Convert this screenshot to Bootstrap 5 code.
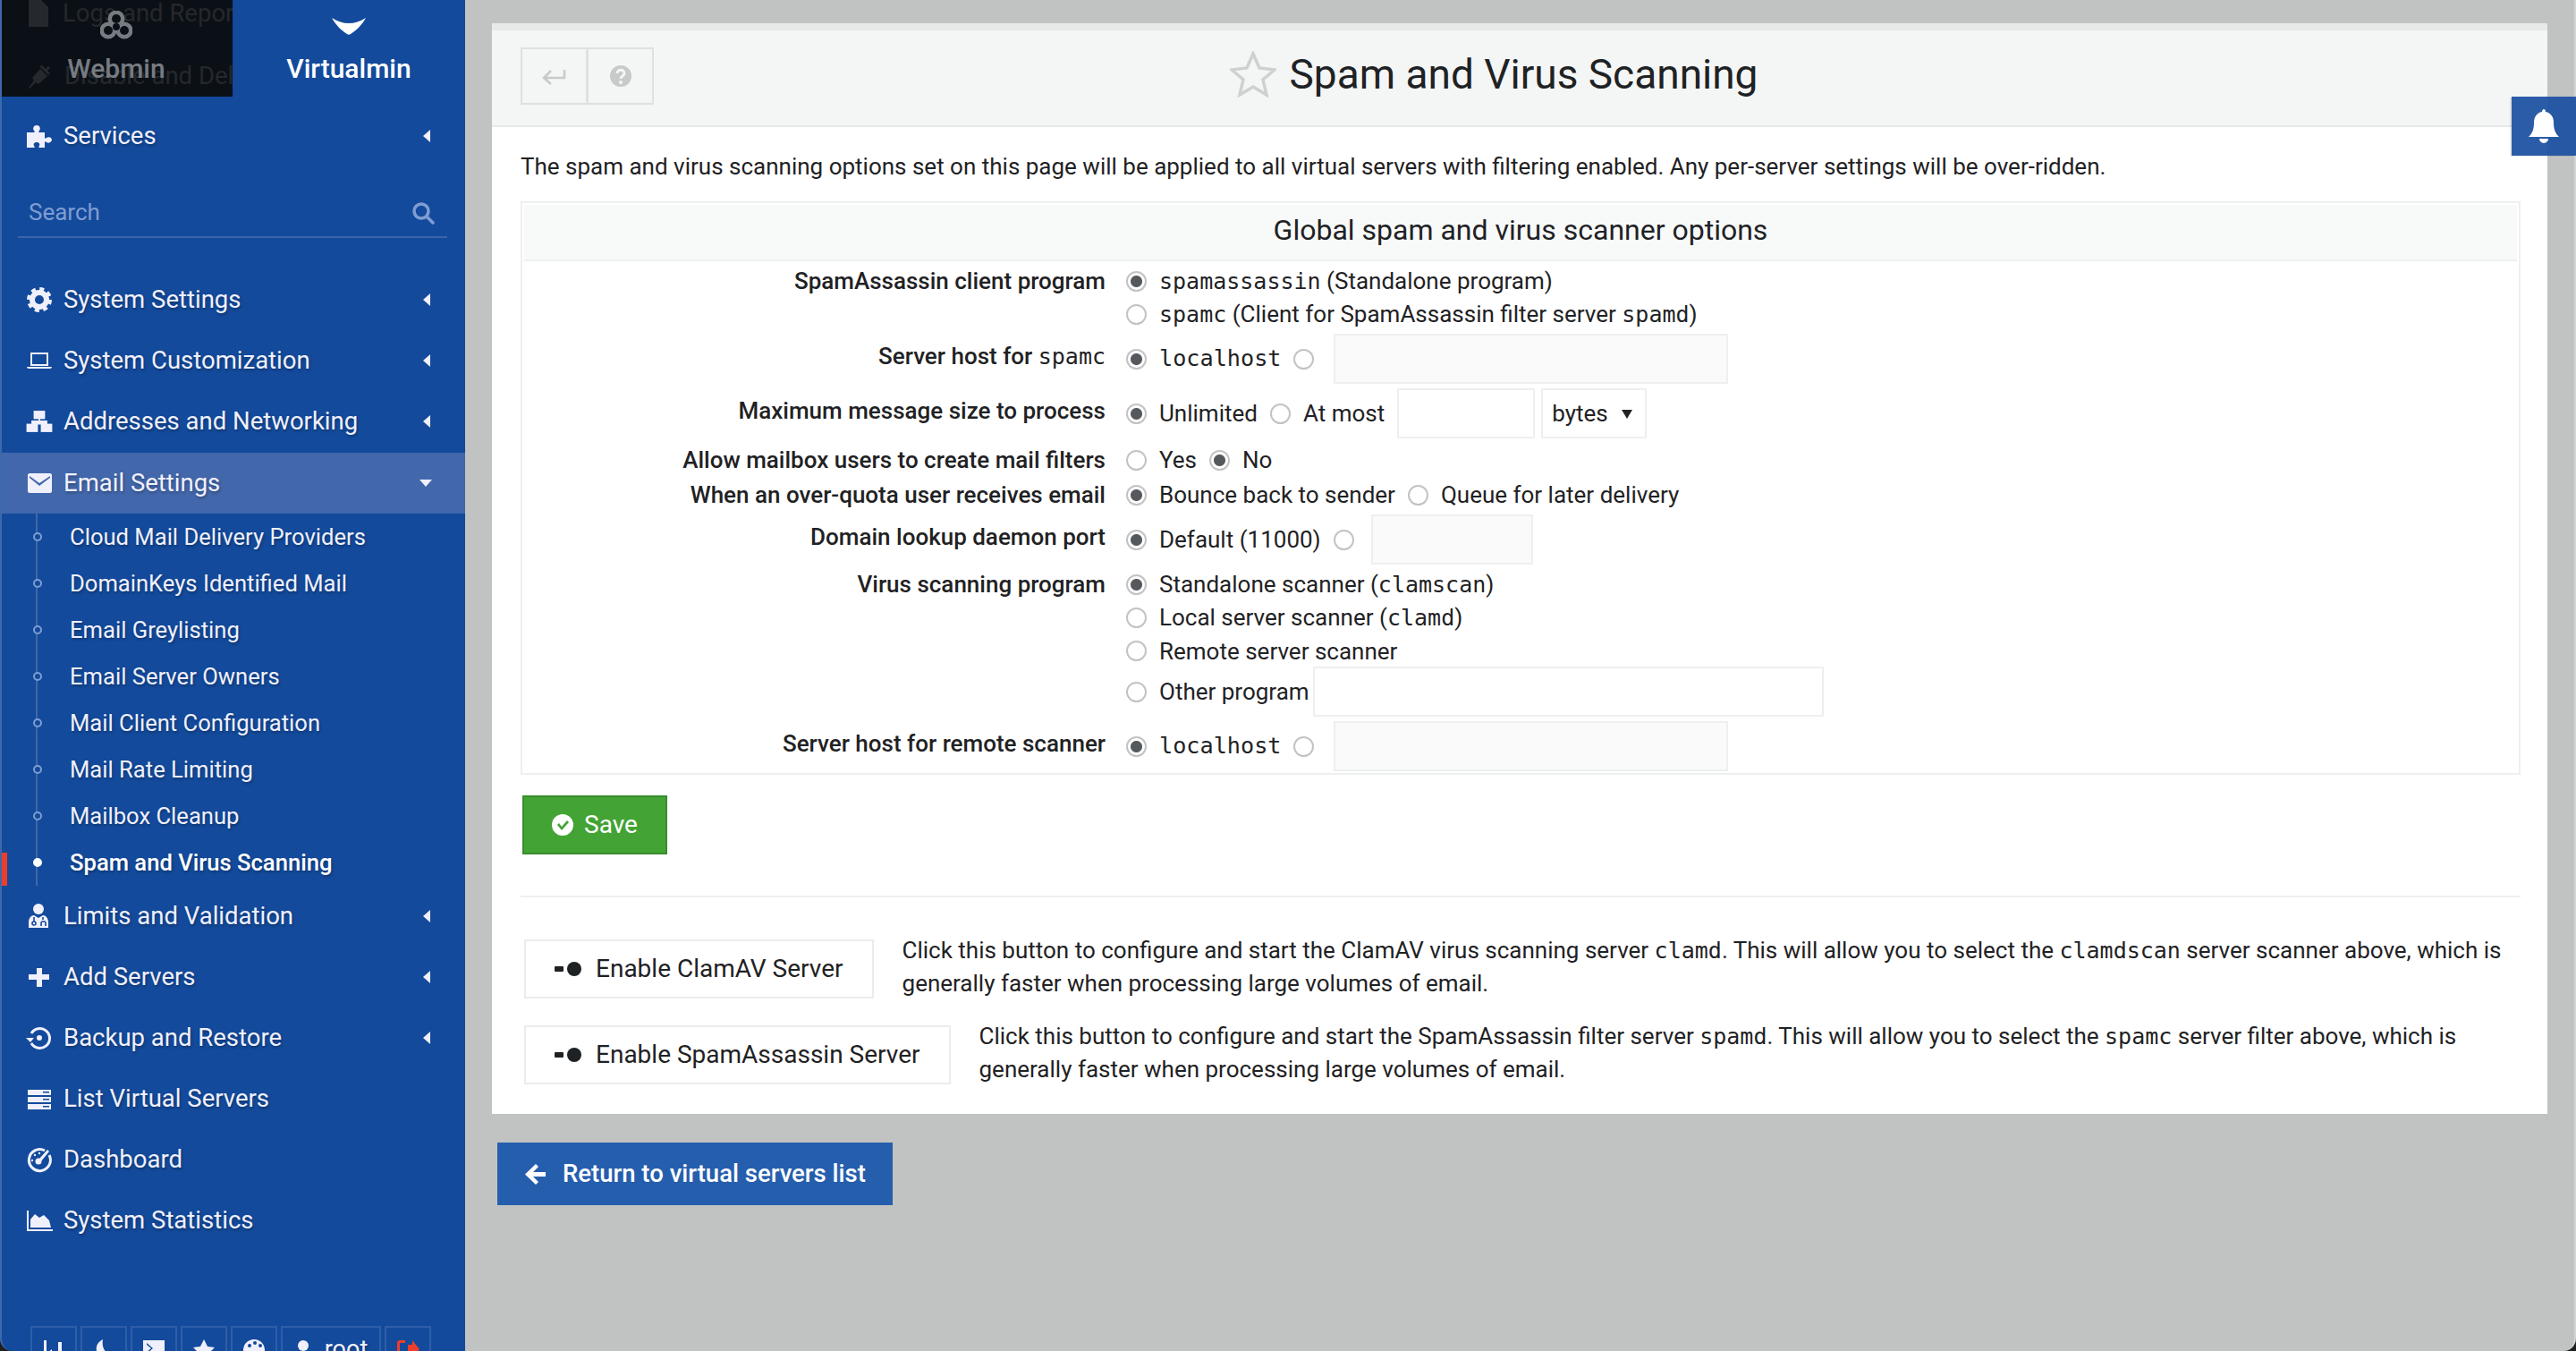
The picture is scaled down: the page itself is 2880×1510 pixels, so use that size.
<!DOCTYPE html>
<html lang="en">
<head>
    <meta charset="UTF-8">
    <title>Spam and Virus Scanning</title>
    <link href="https://cdn.jsdelivr.net/npm/bootstrap@5.3.0/dist/css/bootstrap.min.css" rel="stylesheet">
    <style>
        html, body { height: 100%; }
        body { background: #1e1f20; font-family: Roboto, "Liberation Sans", sans-serif; font-size: 26px; color: #1f2224; overflow: hidden; }
        code, .mono { font-family: "DejaVu Sans Mono", "Liberation Mono", monospace; font-size: 25px; color: inherit; }
        .mono { font-size: 25.2px; }

        /* sidebar */
        .side-menu { width: 520px; height: 1510px; flex: none; background: #134a9b; border-left: 2px solid #3c69ab; color: #f0f0fc; overflow: hidden; border-bottom-left-radius: 14px; font-size: 27.5px; text-shadow: 1px 2px 3px rgba(0,0,0,.28); }
        .side-tabs { height: 108px; margin-left: -2px; margin-bottom: 10px; }
        .side-tab { width: 260px; flex: none; position: relative; overflow: hidden; text-align: center; font-weight: 500; font-size: 30px; text-shadow: none; }
        .side-tab.dark { background: #0b1017; color: #777c82; }
        .side-tab.blue { color: #fff; }
        .tab-logo { position: absolute; left: 0; right: 0; top: 10px; margin: auto; display: block; }
        .tab-name { position: absolute; left: 0; right: 0; top: 57px; line-height: 40px; }
        .ghost { position: absolute; left: 30px; white-space: nowrap; color: #25282c; font-weight: 400; display: flex; gap: 14px; align-items: center; font-size: 27.5px; }
        .menu-row { height: 68px; padding-left: 27px; padding-right: 37px; gap: 12px; white-space: nowrap; }
        .menu-row .ico { width: 30px; height: 30px; flex: none; fill: #f0f0fc; }
        .menu-row .lbl { flex: 1; }
        .tri-left { width: 0; height: 0; border-top: 7px solid transparent; border-bottom: 7px solid transparent; border-right: 8px solid #f0f0fc; margin-right: 2px; }
        .tri-down { width: 0; height: 0; border-left: 7px solid transparent; border-right: 7px solid transparent; border-top: 8px solid #f0f0fc; }
        .menu-row.on { background: #4267ab; margin-left: -2px; padding-left: 29px; margin-top: 1px; }
        .side-search { height: 80px; margin: 0 20px 35px 18px; padding: 25px 14px 0 12px; border-bottom: 2px solid #3a64a8; color: #7f9dd2; text-shadow: none; font-size: 26px; }
        .sub-list { position: relative; padding-left: 76px; margin: 0; list-style: none; }
        .sub-list::before { content: ""; position: absolute; left: 38px; top: 0; bottom: 0; width: 2px; background: #3f67aa; }
        .sub-list li { height: 52px; line-height: 52px; position: relative; font-size: 25.6px; white-space: nowrap; }
        .sub-list li::before { content: ""; position: absolute; left: -41px; top: 21px; width: 10px; height: 10px; border-radius: 50%; border: 2px solid #7f9dd2; background: #134a9b; }
        .sub-list li.cur { font-weight: 500; color: #fff; }
        .sub-list li.cur::before { background: #fff; border-color: #fff; }
        .sub-list li.cur::after { content: ""; position: absolute; left: -78px; top: 15px; width: 8px; height: 37px; background: #ee3d2b; }
        .side-foot { margin-top: 84px; padding-left: 32px; gap: 4px; }
        .foot-btn { height: 60px; width: 52px; border: 2px solid #2f5ea9; display: flex; justify-content: center; padding-top: 12px; gap: 8px; font-size: 27px; line-height: 24px; flex: none; }
        .foot-btn svg { width: 26px; height: 26px; fill: #f0f0fc; flex: none; }
        .foot-btn.wide { width: 112px; }

        /* main panel */
        .main-wrap { padding: 26px 30px 0 30px; flex: 1; min-width: 0; position: relative; background: #c1c3c2; border-right: 2px solid #d3d4d3; border-bottom-right-radius: 14px; }
        .panel { background: #fff; border-top: 8px solid #e7e8e8; height: 1219px; }
        .panel-head { height: 108px; background: #f4f5f5; border-bottom: 2px solid #e7e8e8; padding: 19px 32px 0; position: relative; }
        .head-btns .btn { width: 75px; height: 64px; background: transparent; border: 2px solid #dfe0e0; border-radius: 0; padding: 0; display: flex; align-items: center; justify-content: center; }
        .head-btns .btn + .btn { margin-left: -2px; }
        .page-title { flex: 1; text-align: center; font-size: 46px; font-weight: 400; margin: 0; line-height: 60px; padding-right: 140px; }
        .page-title svg { width: 52px; height: 52px; margin: -8px 15px 0 -67px; vertical-align: middle; }
        .panel-body { padding: 0 30px 0 32px; }
        .intro { margin: 0; height: 83px; line-height: 88px; }
        .opt-box { border: 2px solid #eeefef; height: 641px; }
        .opt-head { height: 63px; background: #f8f9f9; border-bottom: 2px solid #eeefef; margin: 2px 2px 0; line-height: 56px; text-align: center; font-size: 32px; }
        .opt-row { display: grid; grid-template-columns: 652px 1fr; column-gap: 23px; margin-top: 3px; }
        .opt-row.gap-five { margin-top: 5px; }
        .opt-row.gap-six { margin-top: 6px; }
        .opt-label { font-weight: 500; text-align: right; line-height: 36px; margin: 0; white-space: nowrap; }
        .opt-label.tall { line-height: 50px; }
        .opt-line { min-height: 36px; line-height: 36px; display: flex; align-items: center; gap: 14px; white-space: nowrap; }
        .opt-line.tall { min-height: 56px; }
        .line-stack .opt-line { min-height: 37px; }
        .line-stack .opt-line.tall { min-height: 56px; margin-top: -1px; }
        .rad { appearance: none; width: 23px; height: 23px; flex: none; margin: 0; border: 2px solid #c3c3c3; border-radius: 50%; background: #fff; }
        .rad:checked { background: radial-gradient(circle, #55585c 0 6px, #fff 7px); }
        .form-control.fld, .form-select.fld { height: 56px; border: 2px solid #eeefef; border-radius: 0; background-color: #fff; font-size: 26px; padding: 0 10px; color: #1f2224; }
        .form-control.fld:disabled { background: #fafafa; }
        .fld-host { width: 441px; margin-left: 8px; }
        .fld-size { width: 154px; }
        .fld-port { width: 181px; margin-left: 5px; }
        .fld-other { width: 571px; margin-left: -10px; }
        .form-select.fld { width: 118px; margin-left: -7px; background-position: right 8px center; background-size: 24px 24px; background-image: url("data:image/svg+xml,%3Csvg xmlns='http://www.w3.org/2000/svg' viewBox='0 0 24 24'%3E%3Cpath d='M6 8h12l-6 10z' fill='%23222'/%3E%3C/svg%3E"); }
        .save-btn.btn { display: flex; align-items: center; gap: 11px; width: 162px; height: 66px; margin: 23px 0 46px 2px; padding: 0 0 0 30px; background: #43a335; border: 2px solid #388d2c; border-radius: 0; color: #fff; font-size: 28px; }
        .save-btn svg, .back-btn svg { width: 26px; height: 26px; fill: #fff; flex: none; }
        .panel-sep { border-top: 2px solid #eeefef; margin-bottom: 47px; }
        .act-row { display: flex; gap: 32px; line-height: 37px; margin-bottom: 28px; padding-left: 4px; height: 68px; }
        .act-btn.btn { flex: none; height: 66px; display: flex; align-items: center; gap: 14px; padding: 0 32px; background: #fff; border: 2px solid #ececec; border-radius: 0; color: #1f2224; font-size: 28px; }
        .act-btn svg { width: 32px; height: 18px; flex: none; fill: #1f2224; }
        .act-row p { margin: -6px 0 0; }
        .back-btn.btn { display: inline-flex; align-items: center; gap: 17px; width: 442px; height: 70px; margin: 32px 0 0 6px; padding: 0 0 0 30px; background: #265eae; border: 0; border-radius: 0; color: #fff; font-size: 27.5px; font-weight: 500; white-space: nowrap; }
        .bell-tab { position: absolute; right: 0; top: 108px; width: 72px; height: 66px; background: rgba(27,80,160,.93); display: flex; align-items: center; justify-content: center; box-shadow: -2px 1px 0 rgba(0,0,0,.08); }
        .bell-tab svg { width: 36px; height: 40px; fill: #fff; }
    </style>
</head>
<body class="d-flex m-0">
    <aside class="side-menu">
        <div class="side-tabs d-flex">
            <div class="side-tab dark">
                <div class="ghost" style="top: -6px"><svg width="26" height="30" viewBox="0 0 26 30"><path d="M2 0h14l8 8v22H2z" fill="#25282c"/></svg>Logs and Reports</div>
                <div class="ghost" style="top: 64px"><svg width="28" height="30" viewBox="0 0 28 30"><path d="M2 28l6-8-2-3 9-10 8 8-10 9-3-2-7 7zM17 3l4 4 3-3 2 2-3 3 3 3-2 2L14 4z" fill="#25282c"/></svg>Disable and Delete</div>
                <svg class="tab-logo" width="36" height="32" viewBox="0 0 36 32" style="top: 12px">
                    <g fill="none" stroke="#777c82" stroke-width="6"><circle cx="18" cy="9" r="6.500"/><circle cx="9" cy="22" r="6.500"/><circle cx="27" cy="22" r="6.500"/></g>
                    <g fill="#0b1017"><circle cx="18" cy="9" r="5"/><circle cx="9" cy="22" r="5"/><circle cx="27" cy="22" r="5"/><circle cx="18" cy="18" r="4"/></g>
                </svg>
                <div class="tab-name">Webmin</div>
            </div>
            <div class="side-tab blue">
                <svg class="tab-logo" width="38" height="20" viewBox="0 0 38 20" style="top: 19px"><path d="M0 1c7 4 12 6 19 6s12-2 19-6C33 10 27 15 21 19c-1 1-3 1-4 0C11 15 5 10 0 1z" fill="#fff"/></svg>
                <div class="tab-name">Virtualmin</div>
            </div>
        </div>

        <div class="menu-row d-flex align-items-center">
            <svg class="ico" viewBox="0 0 30 30"><path d="M1 11h8c1 0 1-1 0-2-2-3 0-6 3-6s5 3 3 6c-1 1-1 2 0 2h6v6c0 1 1 1 2 0 3-2 6 0 6 2s-3 5-6 3c-1-1-2-1-2 0v6h-6c-1 0-1-1 0-2 1-3-1-4-3-4s-4 1-3 4c1 1 1 2 0 2H1z"/></svg>
            <span class="lbl">Services</span><span class="tri-left"></span>
        </div>
        <div class="side-search d-flex align-items-center justify-content-between">
            <span>Search</span>
            <svg width="26" height="26" viewBox="0 0 26 26" fill="none" stroke="#7f9dd2" stroke-width="3.500" stroke-linecap="round"><circle cx="11" cy="11" r="8"/><path d="M17 17l7 7"/></svg>
        </div>
        <div class="menu-row d-flex align-items-center">
            <svg class="ico" viewBox="0 0 30 30"><circle cx="15" cy="15" r="8" fill="none" stroke="#f0f0fc" stroke-width="6"/><circle cx="15" cy="15" r="12" fill="none" stroke="#f0f0fc" stroke-width="4" stroke-dasharray="5 4.4"/></svg>
            <span class="lbl">System Settings</span><span class="tri-left"></span>
        </div>
        <div class="menu-row d-flex align-items-center">
            <svg class="ico" viewBox="0 0 30 30"><path d="M5 6h20v15H5zm2 2v11h16V8zM1 22h28c0 1-1 2-2 2H3c-1 0-2-1-2-2z" fill-rule="evenodd"/></svg>
            <span class="lbl">System Customization</span><span class="tri-left"></span>
        </div>
        <div class="menu-row d-flex align-items-center">
            <svg class="ico" viewBox="0 0 30 30" fill="none" stroke="#f0f0fc" stroke-width="1.800"><rect x="9.500" y="4" width="11" height="7.500"/><rect x="1.500" y="18.500" width="11" height="7.500"/><rect x="17.500" y="18.500" width="11" height="7.500"/><path d="M15 11.500v3.500M7 18.500V15h16v3.500"/></svg>
            <span class="lbl">Addresses and Networking</span><span class="tri-left"></span>
        </div>
        <div class="menu-row on d-flex align-items-center">
            <svg class="ico" viewBox="0 0 30 30"><path d="M4 4h23c1 0 2 1 2 2v18c0 1-1 2-2 2H4c-1 0-2-1-2-2V6c0-1 1-2 2-2zm0 5l11 9 12-9V7L15 15 4 7z" fill-rule="evenodd"/></svg>
            <span class="lbl">Email Settings</span><span class="tri-down"></span>
        </div>
        <ul class="sub-list">
            <li>Cloud Mail Delivery Providers</li>
            <li>DomainKeys Identified Mail</li>
            <li>Email Greylisting</li>
            <li>Email Server Owners</li>
            <li>Mail Client Configuration</li>
            <li>Mail Rate Limiting</li>
            <li>Mailbox Cleanup</li>
            <li class="cur">Spam and Virus Scanning</li>
        </ul>
        <div class="menu-row d-flex align-items-center">
            <svg class="ico" viewBox="0 0 30 30"><circle cx="14" cy="7" r="6"/><path d="M3 28v-6c0-5 3-8 6-8l5 3 5-3c3 0 6 3 6 8v6z"/><path d="M9 16v5M19 16v3M17 26v-3c0-3 5-3 5 0v3" fill="none" stroke="#134a9b" stroke-width="1.600"/><circle cx="9" cy="23" r="2" fill="none" stroke="#134a9b" stroke-width="1.600"/></svg>
            <span class="lbl">Limits and Validation</span><span class="tri-left"></span>
        </div>
        <div class="menu-row d-flex align-items-center">
            <svg class="ico" viewBox="0 0 30 30"><path d="M12 5h6v7h8v6h-8v8h-6v-8H3v-6h9z"/></svg>
            <span class="lbl">Add Servers</span><span class="tri-left"></span>
        </div>
        <div class="menu-row d-flex align-items-center">
            <svg class="ico" viewBox="0 0 30 30"><path d="M6 10a11 11 0 1 1 0 11" fill="none" stroke="#f0f0fc" stroke-width="3"/><path d="M0 15h9l-4 5z"/><circle cx="15" cy="15" r="3"/></svg>
            <span class="lbl">Backup and Restore</span><span class="tri-left"></span>
        </div>
        <div class="menu-row d-flex align-items-center">
            <svg class="ico" viewBox="0 0 30 30"><path d="M2 5h26v6H2zm0 8h26v6H2zm0 8h26v6H2z"/><path d="M19 7h7v1.500h-7zM19 15h7v1.500h-7zM19 23h7v1.500h-7z" fill="#134a9b"/></svg>
            <span class="lbl">List Virtual Servers</span>
        </div>
        <div class="menu-row d-flex align-items-center">
            <svg class="ico" viewBox="0 0 30 30"><path d="M26 10a12 12 0 1 1-5-5" fill="none" stroke="#f0f0fc" stroke-width="3"/><path d="M15 14l9-10 2 2-9 11z"/><circle cx="14" cy="17" r="3.500"/><circle cx="7" cy="16" r="1.200"/><circle cx="10" cy="10" r="1.200"/><circle cx="15" cy="8" r="1.200"/></svg>
            <span class="lbl">Dashboard</span>
        </div>
        <div class="menu-row d-flex align-items-center">
            <svg class="ico" viewBox="0 0 30 30"><path d="M1 4h2v21h27v2H1zM5 23V14l5-6 5 4 5-3 6 6 2 8z"/></svg>
            <span class="lbl">System Statistics</span>
        </div>

        <div class="side-foot d-flex">
            <div class="foot-btn"><svg viewBox="0 0 26 26"><path d="M2 2h3v24H2zM11 14h3v12h-3zM18 4h4v22h-4zM6 16l5-4v8z"/></svg></div>
            <div class="foot-btn"><svg viewBox="0 0 26 26"><path d="M12 1C6 4 4 9 5 14c1 6 7 10 12 9 3-1 6-2 8-5-8 2-15-6-13-17z"/></svg></div>
            <div class="foot-btn"><svg viewBox="0 0 26 26"><path d="M1 2h24v22H1zm4 3v2l5 4-5 4v2l7-6zm7 12v2h7v-2z" fill-rule="evenodd"/></svg></div>
            <div class="foot-btn"><svg viewBox="0 0 26 26"><path d="M13 1l4 8 8 1-6 6 2 9-8-5-8 5 2-9-6-6 8-1z"/></svg></div>
            <div class="foot-btn"><svg viewBox="0 0 26 26"><path d="M13 1a12 12 0 1 0 0 24c3 0 3-3 2-4-1-2 0-4 3-4h4c2 0 3-2 3-4 0-7-5-12-12-12z"/><circle cx="8" cy="8" r="2" fill="#134a9b"/><circle cx="14" cy="5" r="2" fill="#134a9b"/><circle cx="20" cy="8" r="2" fill="#134a9b"/></svg></div>
            <div class="foot-btn wide"><svg viewBox="0 0 26 26"><circle cx="10" cy="8" r="6"/><path d="M1 25c0-7 3-10 9-10s9 3 9 10z"/><circle cx="22" cy="21" r="4"/></svg><span>root</span></div>
            <div class="foot-btn"><svg viewBox="0 0 26 26"><path d="M10 2H4C2 2 1 3 1 5v16c0 2 1 3 3 3h6v-3H4V5h6zM13 7h5V2l8 10-8 10v-5h-5z" style="fill:#ee3d2b"/></svg></div>
        </div>
    </aside>

    <main class="main-wrap">
        <section class="panel">
            <header class="panel-head d-flex align-items-start">
                <div class="head-btns btn-group">
                    <button class="btn" type="button" aria-label="Back"><svg width="30" height="24" viewBox="0 0 30 24" fill="none" stroke="#c8c9c9" stroke-width="2.500"><path d="M26 5v9H4M11 6l-8 8 8 7"/></svg></button>
                    <button class="btn" type="button" aria-label="Help"><svg width="26" height="26" viewBox="0 0 26 26"><circle cx="13" cy="13" r="12" fill="#c8c9c9"/><path d="M9 10c0-5 8-5 8 0 0 3-4 3-4 6" fill="none" stroke="#f4f5f5" stroke-width="3"/><circle cx="13" cy="20" r="2" fill="#f4f5f5"/></svg></button>
                </div>
                <h1 class="page-title"><svg viewBox="0 0 52 52"><path d="M26 3l7 16 17 2-13 11 4 17-15-9-15 9 4-17L2 21l17-2z" fill="none" stroke="#cfd0d0" stroke-width="3.500"/></svg>Spam and Virus Scanning</h1>
            </header>
            <div class="panel-body">
                <p class="intro">The spam and virus scanning options set on this page will be applied to all virtual servers with filtering enabled. Any per-server settings will be over-ridden.</p>
                <form class="opt-box" onsubmit="return false">
                    <div class="opt-head">Global spam and virus scanner options</div>
                    <div class="opt-row mt-1">
                        <p class="opt-label">SpamAssassin client program</p>
                        <div>
                            <div class="opt-line"><input class="rad" type="radio" name="client" checked><span><code>spamassassin</code> (Standalone program)</span></div>
                            <div class="opt-line"><input class="rad" type="radio" name="client"><span><code>spamc</code> (Client for SpamAssassin filter server <code>spamd</code>)</span></div>
                        </div>
                    </div>
                    <div class="opt-row">
                        <p class="opt-label tall">Server host for <code class="fw-medium">spamc</code></p>
                        <div class="opt-line tall"><input class="rad" type="radio" name="host" checked><span class="mono">localhost</span><input class="rad" type="radio" name="host"><input class="form-control fld fld-host" type="text" disabled></div>
                    </div>
                    <div class="opt-row gap-five">
                        <p class="opt-label tall">Maximum message size to process</p>
                        <div class="opt-line tall"><input class="rad" type="radio" name="size" checked><span>Unlimited</span><input class="rad" type="radio" name="size"><span>At most</span><input class="form-control fld fld-size" type="text"><select class="form-select fld"><option>bytes</option></select></div>
                    </div>
                    <div class="opt-row gap-six">
                        <p class="opt-label">Allow mailbox users to create mail filters</p>
                        <div class="opt-line"><input class="rad" type="radio" name="filters"><span>Yes</span><input class="rad" type="radio" name="filters" checked><span>No</span></div>
                    </div>
                    <div class="opt-row">
                        <p class="opt-label">When an over-quota user receives email</p>
                        <div class="opt-line"><input class="rad" type="radio" name="quota" checked><span>Bounce back to sender</span><input class="rad" type="radio" name="quota"><span>Queue for later delivery</span></div>
                    </div>
                    <div class="opt-row mt-1">
                        <p class="opt-label tall">Domain lookup daemon port</p>
                        <div class="opt-line tall"><input class="rad" type="radio" name="port" checked><span>Default (11000)</span><input class="rad" type="radio" name="port"><input class="form-control fld fld-port" type="text" disabled></div>
                    </div>
                    <div class="opt-row mt-1">
                        <p class="opt-label">Virus scanning program</p>
                        <div class="line-stack">
                            <div class="opt-line"><input class="rad" type="radio" name="virus" checked><span>Standalone scanner (<code>clamscan</code>)</span></div>
                            <div class="opt-line"><input class="rad" type="radio" name="virus"><span>Local server scanner (<code>clamd</code>)</span></div>
                            <div class="opt-line"><input class="rad" type="radio" name="virus"><span>Remote server scanner</span></div>
                            <div class="opt-line tall"><input class="rad" type="radio" name="virus"><span>Other program</span><input class="form-control fld fld-other" type="text"></div>
                        </div>
                    </div>
                    <div class="opt-row gap-five">
                        <p class="opt-label tall">Server host for remote scanner</p>
                        <div class="opt-line tall"><input class="rad" type="radio" name="remote" checked><span class="mono">localhost</span><input class="rad" type="radio" name="remote"><input class="form-control fld fld-host" type="text" disabled></div>
                    </div>
                </form>
                <button class="btn save-btn" type="button"><svg viewBox="0 0 26 26"><path d="M13 1a12 12 0 1 1 0 24 12 12 0 0 1 0-24zm-6 12l5 6 8-9-2-2-6 7-3-4z" fill-rule="evenodd"/></svg>Save</button>
                <div class="panel-sep"></div>
                <div class="act-row">
                    <button class="btn act-btn" type="button"><svg viewBox="0 0 32 18"><rect x="0" y="6" width="10" height="6" rx="1"/><circle cx="22" cy="9" r="8"/></svg>Enable ClamAV Server</button>
                    <p>Click this button to configure and start the ClamAV virus scanning server <code>clamd</code>. This will allow you to select the <code>clamdscan</code> server scanner above, which is generally faster when processing large volumes of email.</p>
                </div>
                <div class="act-row">
                    <button class="btn act-btn" type="button"><svg viewBox="0 0 32 18"><rect x="0" y="6" width="10" height="6" rx="1"/><circle cx="22" cy="9" r="8"/></svg>Enable SpamAssassin Server</button>
                    <p>Click this button to configure and start the SpamAssassin filter server <code>spamd</code>. This will allow you to select the <code>spamc</code> server filter above, which is generally faster when processing large volumes of email.</p>
                </div>
            </div>
        </section>
        <a class="btn back-btn" href="#"><svg viewBox="0 0 26 26"><path d="M13 2l3 3-6 6h14v5H10l6 6-3 3L1 13.500z"/></svg>Return to virtual servers list</a>
    </main>
    <div class="bell-tab"><svg viewBox="0 0 36 40"><path d="M18 1c1 0 2 1 2 3 6 1 9 6 9 12 0 8 2 12 6 16H1c4-4 6-8 6-16 0-6 3-11 9-12 0-2 1-3 2-3zM13 34h10a5 5 0 0 1-10 0z"/></svg></div>
</body>
</html>
